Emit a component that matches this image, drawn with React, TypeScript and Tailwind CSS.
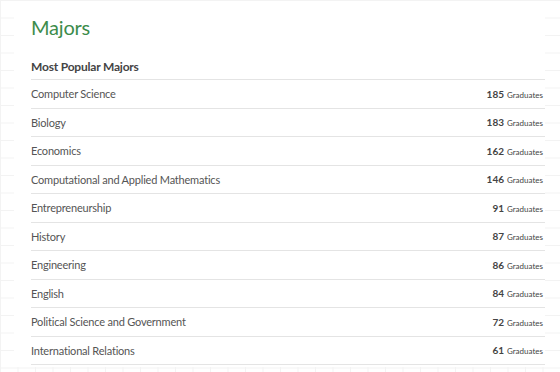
const majors = [
  { name: "Computer Science", count: 185 },
  { name: "Biology", count: 183 },
  { name: "Economics", count: 162 },
  { name: "Computational and Applied Mathematics", count: 146 },
  { name: "Entrepreneurship", count: 91 },
  { name: "History", count: 87 },
  { name: "Engineering", count: 86 },
  { name: "English", count: 84 },
  { name: "Political Science and Government", count: 72 },
  { name: "International Relations", count: 61 },
];

export default function App() {
  return (
    <div className="w-[560px] h-[372px] overflow-hidden bg-white bg-[linear-gradient(#f3f3f3_1px,transparent_1px),linear-gradient(90deg,#f3f3f3_1px,transparent_1px)] bg-[size:17.5px_17.5px] font-['Lato','Open_Sans',sans-serif]">
      <div className="ml-[14px] mt-px w-[531px] bg-white pl-[17px] pt-[12px] pb-[2px]">
        <h1 className="text-[20px] leading-[28px] tracking-[-0.2px] text-[#3d8c4b]">Majors</h1>
        <div className="mt-[17px]">
          <div className="flex h-[22px] items-center border-b border-[#e4e4e4] pb-[3px]">
            <h2 className="text-[12px] font-bold tracking-[-0.2px] text-[#444]">Most Popular Majors</h2>
          </div>
          {majors.map((m) => (
            <div
              key={m.name}
              className="flex h-[28.5px] items-center justify-between border-b border-[#e4e4e4] pr-[2px]"
            >
              <span className="text-[11px] leading-none tracking-[-0.2px] text-[#555]">{m.name}</span>
              <span className="flex items-baseline gap-[3px] leading-none text-[#444]">
                <span className="text-[10px] font-bold">{m.count}</span>
                <span className="text-[8px]">Graduates</span>
              </span>
            </div>
          ))}
        </div>
      </div>
    </div>
  );
}
